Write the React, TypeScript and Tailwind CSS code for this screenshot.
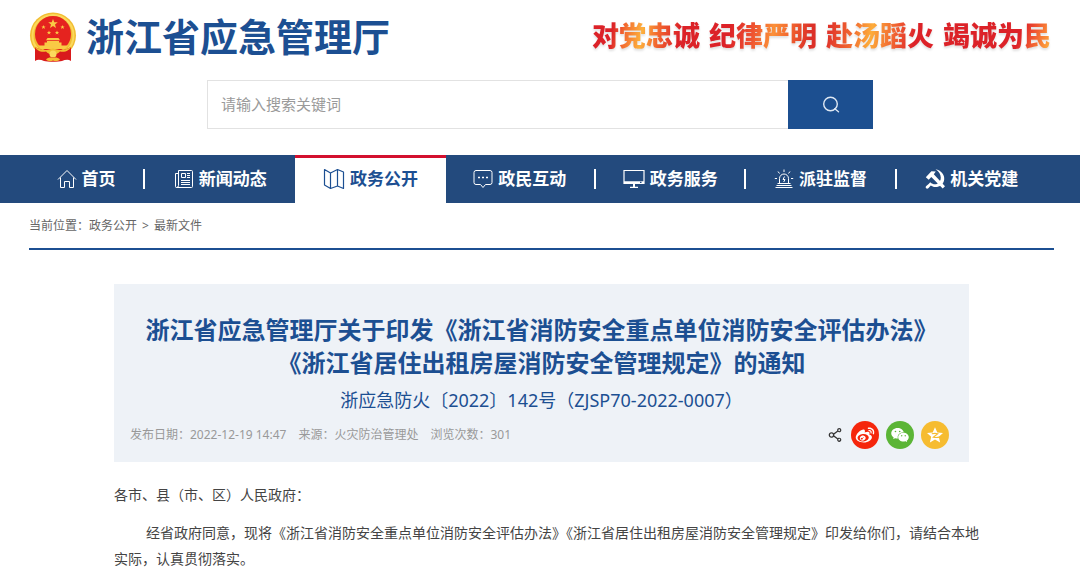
import React from 'react';
import { AiFillWechat, AiOutlineShareAlt, AiOutlineWeibo } from 'react-icons/ai';

interface NavItem {
    label: string;
    icon: React.ReactNode;
    active?: boolean;
    divider?: boolean;
}

const NavIcon: React.FC<{ children: React.ReactNode }> = ({ children }) => (
    <svg viewBox="0 0 20 20" className="h-5 w-5 shrink-0" fill="none" stroke="currentColor" strokeWidth="1" aria-hidden="true">
        {children}
    </svg>
);

const navItems: NavItem[] = [
    {
        label: '首页',
        divider: true,
        icon: (
            <NavIcon>
                <path d="M1 10.5 10 1.5l9 9M3.5 8.5v10h4v-6h5v6h4v-10" strokeLinejoin="round" />
            </NavIcon>
        ),
    },
    {
        label: '新闻动态',
        icon: (
            <NavIcon>
                <path d="M4.5 1.5h13a1 1 0 0 1 1 1v15a1 1 0 0 1-1 1h-15a1 1 0 0 1-1-1v-13h3M4.5 1.5v15a2 2 0 0 1-2 2" />
                <path d="M7.5 4.5h4v4h-4zM13 4.5h3M13 6.5h3M13 8.5h3M7 11.5h9M7 13.5h9M7 15.5h9" />
            </NavIcon>
        ),
    },
    {
        label: '政务公开',
        active: true,
        icon: (
            <svg viewBox="0 0 22 22" className="h-[22px] w-[22px] shrink-0" fill="none" stroke="currentColor" strokeWidth="1.2" strokeLinejoin="round" aria-hidden="true">
                <path d="M1.5 1.5 7.5 5l7-3.5 6 2.5v16.5l-6-2.5-7 2.5-6-3.5zM7.5 5v15.5M14.5 1.5V18" />
            </svg>
        ),
    },
    {
        label: '政民互动',
        divider: true,
        icon: (
            <NavIcon>
                <path d="M3 1.5h14a2 2 0 0 1 2 2v10a2 2 0 0 1-2 2h-4.5l-2.5 3-2.5-3H3a2 2 0 0 1-2-2v-10a2 2 0 0 1 2-2z" />
                <path d="M5 8.5h2M9 8.5h2M13 8.5h2" strokeWidth="1.6" />
            </NavIcon>
        ),
    },
    {
        label: '政务服务',
        divider: true,
        icon: (
            <svg viewBox="0 0 22 20" className="h-5 w-[22px] shrink-0" fill="none" stroke="currentColor" strokeWidth="1.2" aria-hidden="true">
                <path d="M1 1.5h20v13H1zM7 18.3h8" />
                <path d="M1 13.3h20M11 14.5v4" strokeWidth="2" />
                <path d="M17 13.3h1.5" stroke="#234a7d" />
            </svg>
        ),
    },
    {
        label: '派驻监督',
        divider: true,
        icon: (
            <NavIcon>
                <path d="M5.5 14V9.5a4.5 4.5 0 0 1 9 0V14M3.5 14.5h13M2.5 16.5h15M1.5 18.5h17" />
                <path d="M10 .5V3M4 2.5l1.5 2M16 2.5l-1.5 2M.8 9.5H3M17 9.5h2.200" />
                <path d="M10.5 7.5 9 10.5h2L9.700 13" />
            </NavIcon>
        ),
    },
    {
        label: '机关党建',
        icon: (
            <NavIcon>
                <path d="M.8 8.2 6.4 2.3l4.4.3-2 2.6L20 17.3l-2.3 2.3L6.3 7.900l-2.600 2.900z" fill="currentColor" stroke="none" />
                <path d="M10.500.3c5.500 1 9.300 5.500 8.700 10.300-.6 5-4.600 7.600-8.900 7.500-1.800 0-3.300-.6-4.500-1.500l-2.500 2.700c-.6.6-1.600.6-2.200 0-.6-.7-.5-1.700.2-2.200l2.600-2.300 1.300-1.600c2.200 2 4.600 2.500 6.700 1.700 5.300-2 5.600-10.300-1.400-14.600z" fill="currentColor" stroke="none" />
            </NavIcon>
        ),
    },
];

const slogan = [
    { text: '对党忠诚', className: 'bg-[linear-gradient(100deg,#dc2228_20%,#f2662f_30%,#fdb03c_46%,#f2662f_60%,#dc2228_78%)]' },
    { text: '纪律严明', className: 'bg-[linear-gradient(100deg,#dc2228_20%,#ee5130_40%,#fb9038_58%,#f2662f_72%,#dc3028_90%)]' },
    { text: '赴汤蹈火', className: 'bg-[linear-gradient(100deg,#e0322a_4%,#f06430_24%,#fdac3a_42%,#ee5530_66%,#dc2228_80%)]' },
    { text: '竭诚为民', className: 'bg-[linear-gradient(110deg,#dc2228_68%,#ee5130_78%,#fb9038_90%,#ffd048_100%)]' },
];

const Emblem: React.FC = () => (
    <svg viewBox="0 0 48 50" className="h-[50px] w-12 shrink-0" role="img" aria-label="国徽">
        <circle cx="24" cy="23.5" r="23" fill="#f2bd32" />
        <circle cx="24" cy="23.5" r="20.5" fill="none" stroke="#fbd95c" strokeWidth="2" />
        <path d="M6 35c6 3 10 4 18 4s12-1 18-4v14c-3-2-6-1-9 0-3 1-15 1-18 0-3-1-6-2-9 0z" fill="#d91a1c" />
        <circle cx="24" cy="22" r="18" fill="#e5231f" />
        <path d="m24 7 1.300 3.300h3.500l-2.800 2.200 1 3.500-3-2-3 2 1-3.500-2.800-2.200h3.500z" fill="#f9ca45" />
        <path d="m14.500 13 .6 1.400h1.500l-1.200 1 .5 1.500-1.400-.9-1.400.9.500-1.500-1.200-1h1.500zM33.500 13l.6 1.400h1.500l-1.200 1 .5 1.500-1.400-.9-1.400.9.500-1.500-1.200-1h1.500zM20 18.500l.6 1.400h1.500l-1.200 1 .5 1.500-1.400-.9-1.400.9.500-1.500-1.200-1h1.500zM28 18.500l.6 1.400h1.500l-1.200 1 .5 1.500-1.400-.9-1.400.9.500-1.500-1.200-1h1.500z" fill="#f9ca45" />
        <path d="M18.500 26h11l1.500 2.300H17zM18 29h12v1.500h2.500V34h-17v-3.500H18zM9 33.500h30l-3 3.500H12z" fill="#f9ca45" />
        <path d="M6 34.500c5 4 10 4 14 3l4-1 4 1c4 1 9 1 14-3-1 4-6 6-11 5-3 4-11 4-14 0-5 1-10-1-11-5z" fill="#f2bd32" />
        <circle cx="24" cy="42" r="3.5" fill="#fbd95c" />
        <path d="M17 47.500c2-2 5-2.500 7-1.500 2-1 5-.5 7 1.500-2 2-5 2-7 1-2 1-5 1-7-1z" fill="#f2bd32" />
    </svg>
);

const SiteHeader: React.FC = () => (
    <header>
        <div className="flex items-start justify-between px-[29px] pt-3">
            <a href="#" className="flex items-start gap-[9px] text-[#1c4f92]">
                <Emblem />
                <span className="text-[38px] leading-12 font-bold">浙江省应急管理厅</span>
            </a>
            <p className="flex gap-[9px] text-[27px] leading-12 font-black drop-shadow-[0_2px_1px_rgba(0,0,0,0.12)]">
                {slogan.map((part) => (
                    <span key={part.text} className={`bg-clip-text text-transparent ${part.className}`}>
                        {part.text}
                    </span>
                ))}
            </p>
        </div>
        <form className="mx-auto mt-[18px] flex h-[49px] w-full max-w-[666px]" onSubmit={(e) => e.preventDefault()}>
            <input
                type="text"
                aria-label="搜索关键词"
                placeholder="请输入搜索关键词"
                className="min-w-0 flex-1 border border-r-0 border-[#e2e2e2] px-[13px] text-[15px] text-[#444] outline-none placeholder:text-[#9a9a9a]"
            />
            <button type="submit" aria-label="搜索" className="flex w-[85px] items-center justify-center bg-[#1c4f90] text-[#dfe8f3]">
                <svg viewBox="0 0 18 18" className="h-[18px] w-[18px]" fill="none" stroke="currentColor" strokeWidth="1.4" aria-hidden="true">
                    <circle cx="8.5" cy="8" r="6.8" />
                    <path d="m12.8 12.8 3.7 3" strokeLinecap="round" />
                </svg>
            </button>
        </form>
    </header>
);

const MainNav: React.FC = () => (
    <nav className="mt-[26px] flex h-12 bg-[#234a7d] pr-[33px] pl-[29px] text-[17px] font-bold text-white">
        {navItems.map((item, index) => (
            <a
                key={item.label}
                href="#"
                className={`flex items-center ${index === 0 ? 'w-[116px]' : 'flex-1'} ${item.active ? 'border-t-3 border-[#d3102f] bg-white pb-[3px] text-[#1c4f92]' : ''}`}
            >
                <span className="flex flex-1 items-center justify-center gap-[5px] whitespace-nowrap">
                    {item.icon}
                    {item.label}
                </span>
                {item.divider && <span className="h-5 w-0.5 bg-white" />}
            </a>
        ))}
    </nav>
);

const ShareBar: React.FC = () => (
    <div className="flex items-center gap-[7px] text-white">
        <button type="button" aria-label="分享" className="text-[#333]">
            <AiOutlineShareAlt size={18} />
        </button>
        <button type="button" aria-label="分享到微博" className="flex h-7 w-7 items-center justify-center rounded-full bg-[#f5260c]">
            <AiOutlineWeibo size={22} />
        </button>
        <button type="button" aria-label="分享到微信" className="flex h-7 w-7 items-center justify-center rounded-full bg-[#5bb536]">
            <AiFillWechat size={20} />
        </button>
        <button type="button" aria-label="分享到QQ空间" className="flex h-7 w-7 items-center justify-center rounded-full bg-[#f6bc30]">
            <svg viewBox="0 0 18 18" className="h-[18px] w-[18px]" aria-hidden="true">
                <path d="m9 1.200 2.300 5.200 5.700.6-4.200 3.800 1.300 5.700L9 13.600l-5.100 2.900 1.300-5.700L1 7l5.700-.6z" fill="currentColor" />
                <path d="M5.800 7.700c2.200-.5 4.200-.5 6 0l-4.500 3.500c2 .4 4 .4 6.200-.1" fill="none" stroke="#f6bc30" strokeWidth="1.1" />
            </svg>
        </button>
    </div>
);

const App: React.FC = () => {
    return (
        <div className="bg-white font-['Noto_Sans','Noto_Sans_CJK_SC',sans-serif]">
            <SiteHeader />
            <MainNav />
            <main className="mr-[26px] ml-[29px]">
                <div className="flex h-[47px] items-center gap-[5px] border-b-2 border-[#1c4f92] text-xs text-[#666]">
                    <span>
                        当前位置：<a href="#">政务公开</a>
                    </span>
                    <span>&gt;</span>
                    <a href="#">最新文件</a>
                </div>
                <article className="mx-auto mt-[34px] max-w-[855px]">
                    <header className="bg-[#eef2f7] px-4 pt-[29px] pb-[13px]">
                        <h1 className="text-center text-2xl leading-[33px] font-bold text-[#1c4f92]">
                            浙江省应急管理厅关于印发《浙江省消防安全重点单位消防安全评估办法》
                            <br />
                            《浙江省居住出租房屋消防安全管理规定》的通知
                        </h1>
                        <p className="mt-2 text-center text-lg leading-[26px] text-[#1c4f92]">浙应急防火〔2022〕142号（ZJSP70-2022-0007）</p>
                        <div className="mt-2 flex items-center justify-between pr-1">
                            <p className="flex gap-3 text-xs text-[#999]">
                                <span>发布日期：2022-12-19 14:47</span>
                                <span>来源：火灾防治管理处</span>
                                <span>浏览次数：301</span>
                            </p>
                            <ShareBar />
                        </div>
                    </header>
                    <div className="mt-5 -mr-4 text-sm leading-[26px] text-[#444]">
                        <p>各市、县（市、区）人民政府：</p>
                        <p className="mt-3 indent-8">
                            经省政府同意，现将《浙江省消防安全重点单位消防安全评估办法》《浙江省居住出租房屋消防安全管理规定》印发给你们，请结合本地实际，认真贯彻落实。
                        </p>
                    </div>
                </article>
            </main>
        </div>
    );
};

export default App;
